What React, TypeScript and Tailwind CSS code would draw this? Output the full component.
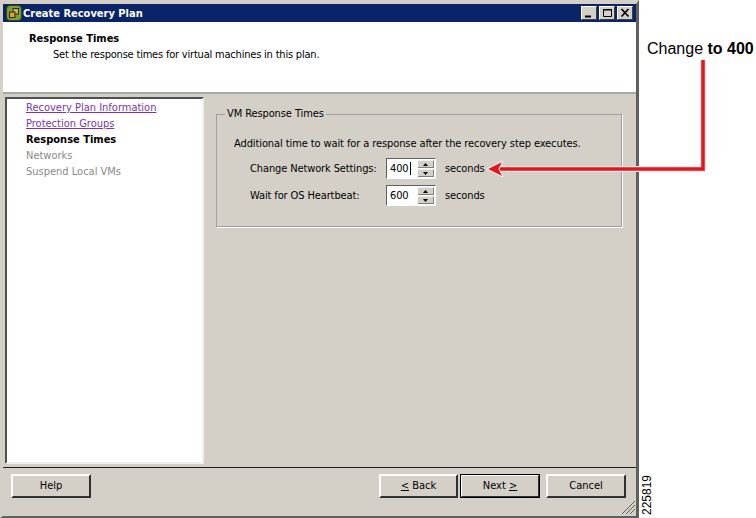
const uiFont = "font-['DejaVu_Sans_Condensed','Noto_Sans',sans-serif] text-[11px] leading-[14px]";

const steps = [
  { label: "Recovery Plan Information", cls: "text-[#7a33b8] underline" },
  { label: "Protection Groups", cls: "text-[#7a33b8] underline" },
  { label: "Response Times", cls: "font-bold text-black" },
  { label: "Networks", cls: "text-[#8a8a8a]" },
  { label: "Suspend Local VMs", cls: "text-[#8a8a8a]" },
];

function CaptionButton({ children }: { children: React.ReactNode }) {
  return (
    <div className="flex h-[14px] w-[16px] items-center justify-center border border-t-white border-l-white border-r-[#404040] border-b-[#404040] bg-[#d4d0c8]">
      <svg width="12" height="10" viewBox="0 0 12 10" fill="none" stroke="black">
        {children}
      </svg>
    </div>
  );
}

function Spinner({ value, caret }: { value: string; caret?: boolean }) {
  return (
    <div className="flex h-[21px] w-[50px] border border-t-[#606060] border-l-[#606060] border-r-white border-b-white bg-white">
      <div className="flex flex-1 items-center pl-[3px] text-black">
        {value}
        {caret && <span className="ml-px h-[13px] w-px bg-black" />}
      </div>
      <div className="mr-px flex w-[16px] flex-col gap-px bg-white py-px">
        <div className="flex flex-1 items-center justify-center border-t border-r border-b border-t-[#f0eee8] border-r-[#808080] border-b-[#808080] bg-[#d4d0c8]">
          <svg width="5" height="3" viewBox="0 0 5 3"><path d="M2.5 0 5 3H0z" fill="black" /></svg>
        </div>
        <div className="flex flex-1 items-center justify-center border-t border-r border-b border-t-[#f0eee8] border-r-[#808080] border-b-[#808080] bg-[#d4d0c8]">
          <svg width="5" height="3" viewBox="0 0 5 3"><path d="M0 0h5L2.5 3z" fill="black" /></svg>
        </div>
      </div>
    </div>
  );
}

function DialogButton({ children, primary, narrow }: { children: React.ReactNode; primary?: boolean; narrow?: boolean }) {
  return (
    <button
      type="button"
      className={
        "flex h-[24px] items-center justify-center border-2 border-t-white border-l-white border-r-[#303030] border-b-[#303030] bg-[#d4d0c8] text-black " +
        (narrow ? "w-[79px] " : "w-[80px] ") +
        (primary ? "outline outline-1 -outline-offset-1 outline-black" : "")
      }
    >
      {children}
    </button>
  );
}

export default function App() {
  return (
    <div className={`relative flex h-[518px] w-[756px] overflow-hidden bg-white text-black ${uiFont}`}>
      {/* Dialog window */}
      <div className="flex h-[518px] w-[639px] flex-col border-t-[4px] border-r-[3px] border-b-[2px] border-l-[3px] border-t-[#d4d0c8] border-r-[#606060] border-b-[#606060] border-l-[#d4d0c8] bg-[#d4d0c8]">
        {/* Title bar */}
        <div className="flex h-[18px] shrink-0 items-center justify-between bg-[#0a246a] pr-[3px] pl-[3px] text-white">
          <div className="flex items-center gap-px">
            <svg width="16" height="16" viewBox="0 0 16 16">
              <rect x="0.5" y="0.5" width="15" height="15" rx="3.5" fill="#7f9f2e" stroke="#2f4a12" />
              <rect x="7" y="3.5" width="5.5" height="5.5" fill="#c9b45e" stroke="#2a2a1a" />
              <rect x="3.5" y="7" width="5.5" height="5.5" fill="#e0a030" stroke="#2a2a1a" />
            </svg>
            <span className="mt-px font-bold">Create Recovery Plan</span>
          </div>
          <div className="flex items-center gap-[2px]">
            <CaptionButton>
              <path d="M2 8.5h6" strokeWidth="2" />
            </CaptionButton>
            <CaptionButton>
              <path d="M2.5 1.5h8v7h-8z M2 2h9" />
            </CaptionButton>
            <CaptionButton>
              <path d="M2.5 1 9.5 8.5 M9.5 1 2.5 8.5" strokeWidth="1.7" />
            </CaptionButton>
          </div>
        </div>

        {/* Header */}
        <div className="h-[72px] shrink-0 border-b-2 border-b-[#a8a8a8] bg-white pt-[10px] pl-[26px]">
          <div className="font-bold">Response Times</div>
          <div className="mt-[2px] pl-[24px] tracking-[-0.2px]">Set the response times for virtual machines in this plan.</div>
        </div>

        {/* Body */}
        <div className="flex min-h-0 flex-1 pt-[3px] pr-[14px] pb-[3px] pl-[2px]">
          <div className="flex w-[199px] shrink-0 flex-col gap-[2px] border-2 border-t-[#505050] border-l-[#505050] border-r-[#f0f0f0] border-b-[#f0f0f0] bg-white pt-[2px] pl-[19px]">
            {steps.map((s) => (
              <div key={s.label} className={s.cls}>{s.label}</div>
            ))}
          </div>
          <div className="mt-[10px] ml-[12px] h-[120px] flex-1">
            <fieldset className="h-full border border-[#a0a0a0] pl-[17px] shadow-[1px_1px_0_white]">
              <legend className="-ml-[9px] px-[2px] tracking-[-0.1px]">VM Response Times</legend>
              <div className="mt-[16px] tracking-[-0.1px]">Additional time to wait for a response after the recovery step executes.</div>
              <div className="mt-[7px] flex flex-col gap-[6px] pl-[16px] tracking-[-0.12px]">
                <div className="flex items-center">
                  <span className="w-[136px]">Change Network Settings:</span>
                  <Spinner value="400" caret />
                  <span className="ml-[9px]">seconds</span>
                </div>
                <div className="flex items-center">
                  <span className="w-[136px]">Wait for OS Heartbeat:</span>
                  <Spinner value="600" />
                  <span className="ml-[9px]">seconds</span>
                </div>
              </div>
            </fieldset>
          </div>
        </div>

        {/* Footer */}
        <div className="flex h-[49px] shrink-0 items-start justify-between border-t border-t-[#202020] pt-[6px] pr-[10px] pl-[8px]">
          <DialogButton>Help</DialogButton>
          <div className="flex">
            <DialogButton narrow><span><u>&lt;</u> Back</span></DialogButton>
            <div className="mr-[6px] ml-[2px]">
              <DialogButton primary><span>Next <u>&gt;</u></span></DialogButton>
            </div>
            <DialogButton>Cancel</DialogButton>
          </div>
        </div>
      </div>

      {/* Resize grip */}
      <svg className="absolute top-[500px] left-[621px]" width="15" height="15" viewBox="0 0 15 15" stroke="#606060">
        <path d="M14 1 1 14M14 5 5 14M14 9 9 14" />
      </svg>

      {/* Figure number */}
      <div className="absolute top-[495px] left-[647px] origin-center -translate-x-1/2 -translate-y-1/2 -rotate-90 font-['Liberation_Sans',sans-serif] text-[12px] whitespace-nowrap">
        225819
      </div>

      {/* Callout */}
      <div className="absolute top-[40px] left-[647px] font-['Liberation_Sans',sans-serif] text-[16px] leading-[18px] whitespace-nowrap">
        Change <b>to 400</b>
      </div>
      <svg className="absolute top-0 left-0" width="756" height="518" viewBox="0 0 756 518" fill="none">
        <path d="M703 60V169H500" stroke="#f4e8e8" strokeWidth="6" />
        <path d="M703 60V169H498" stroke="#e2151b" strokeWidth="3.5" />
        <path d="M487 169 503 161 499 169 503 177z" fill="#e2151b" stroke="white" />
      </svg>
    </div>
  );
}
